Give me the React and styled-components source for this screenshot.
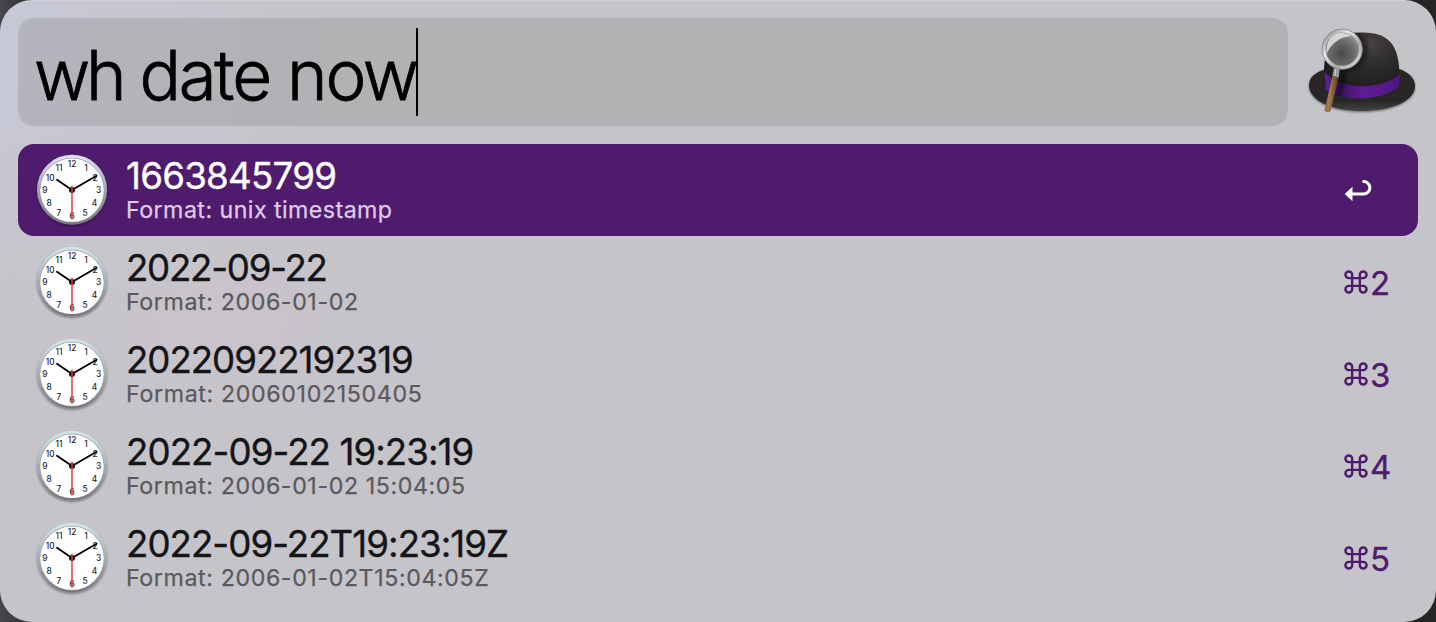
import React from "react";
import styled, { createGlobalStyle } from "styled-components";

const GlobalStyle = createGlobalStyle`
  * { box-sizing: border-box; }
  body { margin: 0; background: #29292c; font-family: Inter, "Liberation Sans", sans-serif; }
`;

const Backdrop = styled.div`
  width: 1436px;
  height: 622px;
  overflow: hidden;
  background: linear-gradient(90deg, #47474b 0, #2b2b2d 40px, #252526 100%);
`;

const Panel = styled.main`
  width: 100%;
  height: 100%;
  padding: 18px;
  display: flex;
  flex-direction: column;
  gap: 18px;
  border-radius: 32px;
  background:
    radial-gradient(ellipse 330px 260px at 0 60px, rgba(200, 203, 222, 0.7), rgba(200, 203, 222, 0) 100%),
    radial-gradient(ellipse 240px 150px at 220px 320px, rgba(205, 197, 203, 0.5), rgba(205, 197, 203, 0) 100%),
    #c5c4c9;
  box-shadow: inset 0 1px 1px rgba(225, 225, 230, 0.4);
`;

const Header = styled.header`
  display: flex;
  align-items: center;
  gap: 18px;
  height: 108px;
`;

const SearchField = styled.div`
  flex: 0 0 1270px;
  height: 108px;
  padding: 0 18px 0 16px;
  display: flex;
  align-items: center;
  border-radius: 16px;
  background: rgba(150, 150, 150, 0.4);
`;

const Query = styled.span`
  width: 382px;
  flex: none;
  white-space: nowrap;
  color: #000;
  font-size: 69px;
  font-weight: 300;
  line-height: 84px;
  letter-spacing: -2.25px;
  padding-top: 5px;
  -webkit-text-stroke: 0.8px #000;
`;

const FirstWord = styled.span`
  letter-spacing: -4.3px;
`;

const Caret = styled.span`
  width: 2px;
  height: 88px;
  background: #000;
`;

const Results = styled.ul`
  list-style: none;
  margin: 0;
  padding: 0;
`;

const Row = styled.li`
  height: 92px;
  padding: 0 28px 0 14px;
  display: flex;
  align-items: center;
  border-radius: 16px;
  background: ${(p) => (p.$active ? "#4f1b6d" : "transparent")};
`;

const Labels = styled.div`
  flex: 1;
  padding-left: 14px;
`;

const Title = styled.div`
  color: ${(p) => (p.$active ? "#fff" : "#151417")};
  font-size: 36.7px;
  font-weight: 400;
  line-height: 40px;
  letter-spacing: ${(p) => p.$tracking}px;
  -webkit-text-stroke: 0.35px currentColor;
`;

const Subtitle = styled.div`
  color: ${(p) => (p.$active ? "#dfcbe9" : "#5b595e")};
  font-size: 23.2px;
  line-height: 28px;
  letter-spacing: ${(p) => p.$tracking}px;
  -webkit-text-stroke: 0.25px currentColor;
`;

const Shortcut = styled.div`
  display: flex;
  align-items: center;
  gap: 2px;
  color: #4f1b6d;
  line-height: 40px;
`;

const KeyLabel = styled.span`
  width: 20px;
  padding-top: 1px;
  font-size: 33px;
  -webkit-text-stroke: 0.35px currentColor;
`;

const ReturnIcon = styled.svg`
  width: 46px;
  height: 32px;
`;

const CommandIcon = styled.svg`
  width: 24px;
  height: 24px;
`;

const ClockSvg = styled.svg`
  width: 80px;
  height: 80px;
  flex: none;
`;

const HatSvg = styled.svg`
  width: 112px;
  height: 108px;
  flex: none;
`;

const numerals = [
  ["12", 40, 17.3], ["1", 54, 20.9], ["2", 63, 30.5], ["3", 66.6, 43.2],
  ["4", 62.6, 56.2], ["5", 53, 65.7], ["6", 40, 69.3], ["7", 26.8, 65.7],
  ["8", 17, 56.2], ["9", 12.8, 43.2], ["10", 18.2, 30.5], ["11", 27, 20.9],
];

function Clock({ id, active }) {
  return (
    <ClockSvg viewBox="0 0 80 80">
      <defs>
        <linearGradient id={id} x1="0" y1="0" x2="0" y2="1">
          <stop offset="0" stopColor={active ? "#e5e4fb" : "#d6e4eb"} />
          <stop offset="0.5" stopColor={active ? "#a7a3ba" : "#a4b0b6"} />
          <stop offset="1" stopColor="#777a7c" />
        </linearGradient>
        <filter id={`${id}-shadow`} x="-10%" y="-10%" width="120%" height="125%">
          <feDropShadow dx="0" dy="1.2" stdDeviation="1" floodOpacity="0.42" />
        </filter>
      </defs>
      <circle cx="40" cy="39.7" r="35" fill={`url(#${id})`} filter={`url(#${id}-shadow)`} />
      <circle cx="40" cy="40" r="32.3" fill="#7e8589" opacity="0.65" />
      <circle cx="40" cy="40.3" r="31.8" fill="#fff" />
      <g fill="#252525" fontFamily="Inter, sans-serif" fontSize="8.3" fontWeight="500" textAnchor="middle">
        {numerals.map(([n, x, y]) => (
          <text key={n} x={x} y={y}>{n}</text>
        ))}
      </g>
      <path d="M40 40 25 29.8M40 40 64.5 25.8" stroke="#000" strokeWidth="1.8" strokeLinecap="round" />
      <circle cx="40" cy="40" r="3" fill="#160806" />
      <path d="M40 35.5V69.5" stroke="#d5493f" strokeWidth="1.7" opacity="0.9" />
      <circle cx="40" cy="40" r="1.2" fill="#9e2722" />
    </ClockSvg>
  );
}

function Hat() {
  return (
    <HatSvg viewBox="1306 18 112 108">
      <defs>
        <radialGradient id="crown" cx="0.62" cy="0.18" r="0.7">
          <stop offset="0" stopColor="#454240" />
          <stop offset="0.5" stopColor="#2e2c2b" />
          <stop offset="1" stopColor="#201e1f" />
        </radialGradient>
        <linearGradient id="brim" x1="0" y1="0" x2="0" y2="1">
          <stop offset="0" stopColor="#2b2929" />
          <stop offset="0.75" stopColor="#272526" />
          <stop offset="1" stopColor="#454342" />
        </linearGradient>
        <linearGradient id="band" x1="0" y1="0" x2="1" y2="0">
          <stop offset="0" stopColor="#6620a0" />
          <stop offset="0.2" stopColor="#3d1460" />
          <stop offset="0.5" stopColor="#5f1b94" />
          <stop offset="1" stopColor="#51167f" />
        </linearGradient>
        <radialGradient id="lens" cx="0.48" cy="0.62" r="0.55">
          <stop offset="0" stopColor="#494949" />
          <stop offset="0.65" stopColor="#6c6c6c" />
          <stop offset="1" stopColor="#949495" />
        </radialGradient>
        <linearGradient id="rim" x1="0" y1="0" x2="1" y2="1">
          <stop offset="0" stopColor="#858585" />
          <stop offset="0.35" stopColor="#e6e6e6" />
          <stop offset="0.65" stopColor="#aaa" />
          <stop offset="1" stopColor="#e2e2e2" />
        </linearGradient>
        <linearGradient id="handle" x1="0" y1="0" x2="1" y2="0.15">
          <stop offset="0" stopColor="#74502d" />
          <stop offset="0.4" stopColor="#a57e52" />
          <stop offset="1" stopColor="#5b3a21" />
        </linearGradient>
        <filter id="hat-shadow" x="-10%" y="-10%" width="120%" height="130%">
          <feDropShadow dx="0" dy="1" stdDeviation="0.8" floodOpacity="0.5" />
        </filter>
        <filter id="soft"><feGaussianBlur stdDeviation="2" /></filter>
        <clipPath id="crown-clip">
          <path d="M1324 96C1324 48 1334 32 1361 32 1389 32 1399 48 1399 76V96Z" />
        </clipPath>
      </defs>
      <path d="M1309 85C1309 75 1319 71 1329 68H1396C1407 71 1415 77 1415 86 1415 101 1391 111 1362 111 1332 111 1309 101 1309 85Z" fill="url(#brim)" filter="url(#hat-shadow)" />
      <path d="M1324 78C1323 45 1333 32.5 1362 32.5 1392 32.5 1399 48 1399.5 76V84C1383 96 1341 97 1325 87Z" fill="url(#crown)" />
      <path d="M1324.5 72C1340 91 1383 90 1400 74L1399 86C1383 102 1341 102 1326 90Z" fill="url(#band)" />
      <g clipPath="url(#crown-clip)" filter="url(#soft)" opacity="0.45">
        <circle cx="1347" cy="50" r="18" fill="none" stroke="#000" strokeWidth="5" />
        <path d="M1344 70 1338 99" stroke="#000" strokeWidth="6" />
      </g>
      <path d="M1332.5 76 1338.5 77.5 1330.5 111.5Q1326 113.5 1324.5 110Z" fill="url(#handle)" />
      <path d="M1334 67H1340L1338.6 77.5 1332.4 76Z" fill="#999" />
      <path d="M1336 67 1335 76" stroke="#ccc" strokeWidth="1.2" />
      <circle cx="1342.2" cy="49.2" r="18.4" fill="url(#lens)" stroke="url(#rim)" strokeWidth="3.6" />
      <circle cx="1342.2" cy="49.2" r="20.1" fill="none" stroke="#777" strokeWidth="0.7" />
      <path d="M1326.5 54C1325.5 41 1332 33 1341 33 1346 33 1349 34 1351 36 1339 37 1331 44 1326.5 54Z" fill="#dedee0" opacity="0.9" />
    </HatSvg>
  );
}

const items = [
  { title: "1663845799", format: "unix timestamp", tt: -0.75, st: 0.45, active: true },
  { title: "2022-09-22", format: "2006-01-02", tt: -1.27, st: 0.6, key: "2" },
  { title: "20220922192319", format: "20060102150405", tt: -1.04, st: 0.64, key: "3" },
  { title: "2022-09-22 19:23:19", format: "2006-01-02 15:04:05", tt: -0.94, st: 0.6, key: "4" },
  { title: "2022-09-22T19:23:19Z", format: "2006-01-02T15:04:05Z", tt: -0.98, st: 0.6, key: "5" },
];

export default function App() {
  return (
    <Backdrop>
      <GlobalStyle />
      <Panel>
        <Header>
          <SearchField>
            <Query><FirstWord>wh</FirstWord> date now</Query>
            <Caret />
          </SearchField>
          <Hat />
        </Header>
        <Results>
          {items.map((item, i) => (
            <Row key={item.title} $active={item.active}>
              <Clock id={`clock${i}`} active={item.active} />
              <Labels>
                <Title $active={item.active} $tracking={item.tt}>{item.title}</Title>
                <Subtitle $active={item.active} $tracking={item.st}>Format: {item.format}</Subtitle>
              </Labels>
              <Shortcut>
                {item.active ? (
                  <ReturnIcon viewBox="0 0 46 32">
                    <path d="M0.7 20 8.5 12.7V27.3Z" fill="#fff" />
                    <path d="M8 20H19.6A6.25 6.25 0 0 0 19.6 7.5H18.5" fill="none" stroke="#fff" strokeWidth="3" />
                  </ReturnIcon>
                ) : (
                  <>
                    <CommandIcon viewBox="0 0 25 25" fill="none" stroke="currentColor" strokeWidth="2.5">
                      <path d="M8.5 8.5V5A3.5 3.5 0 1 0 5 8.5H20A3.5 3.5 0 1 0 16.5 5V20A3.5 3.5 0 1 0 20 16.5H5A3.5 3.5 0 1 0 8.5 20Z" />
                    </CommandIcon>
                    <KeyLabel>{item.key}</KeyLabel>
                  </>
                )}
              </Shortcut>
            </Row>
          ))}
        </Results>
      </Panel>
    </Backdrop>
  );
}
